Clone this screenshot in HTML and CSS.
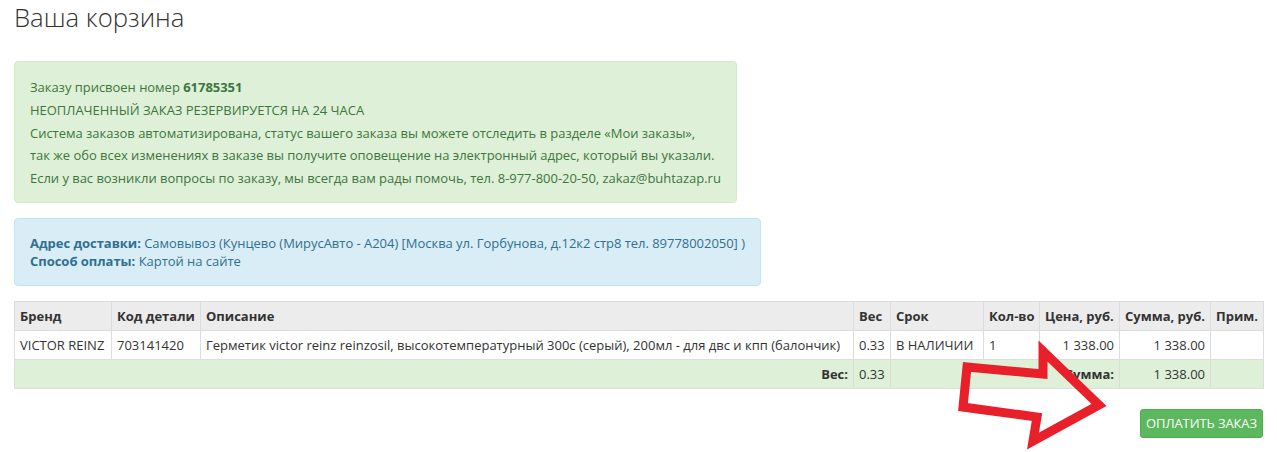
FILE: index.html
```html
<!DOCTYPE html>
<html lang="ru">
<head>
<meta charset="utf-8">
<title>Ваша корзина</title>
<link rel="stylesheet" href="styles.css">
</head>
<body>
<div class="page">
  <h1 class="title">Ваша корзина</h1>

  <div class="alert alert-success">
    <p>Заказу присвоен номер <b>61785351</b></p>
    <p>НЕОПЛАЧЕННЫЙ ЗАКАЗ РЕЗЕРВИРУЕТСЯ НА 24 ЧАСА</p>
    <p>Система заказов автоматизирована, статус вашего заказа вы можете отследить в разделе «Мои заказы»,</p>
    <p>так же обо всех изменениях в заказе вы получите оповещение на электронный адрес, который вы указали.</p>
    <p>Если у вас возникли вопросы по заказу, мы всегда вам рады помочь, тел. 8-977-800-20-50, zakaz@buhtazap.ru</p>
  </div>

  <div class="alert alert-info">
    <p><b>Адрес доставки:</b> Самовывоз (Кунцево (МирусАвто - А204) [Москва ул. Горбунова, д.12к2 стр8 тел. 89778002050] )</p>
    <p><b>Способ оплаты:</b> Картой на сайте</p>
  </div>

  <table class="cart">
    <colgroup>
      <col class="c-brand"><col class="c-code"><col class="c-desc"><col class="c-weight"><col class="c-term"><col class="c-qty"><col class="c-price"><col class="c-sum"><col class="c-note">
    </colgroup>
    <thead>
      <tr>
        <th>Бренд</th><th>Код детали</th><th>Описание</th><th>Вес</th><th>Срок</th><th>Кол-во</th><th>Цена, руб.</th><th>Сумма, руб.</th><th>Прим.</th>
      </tr>
    </thead>
    <tbody>
      <tr>
        <td>VICTOR REINZ</td><td>703141420</td><td>Герметик victor reinz reinzosil, высокотемпературный 300с (серый), 200мл - для двс и кпп (балончик)</td><td>0.33</td><td>В НАЛИЧИИ</td><td>1</td><td class="num">1 338.00</td><td class="num">1 338.00</td><td></td>
      </tr>
    </tbody>
    <tfoot>
      <tr>
        <th colspan="3" class="num">Вес:</th><td>0.33</td><th colspan="3" class="num">Сумма:</th><td class="num">1 338.00</td><td></td>
      </tr>
    </tfoot>
  </table>

  <div class="actions">
    <button class="btn-pay" type="button">ОПЛАТИТЬ ЗАКАЗ</button>
  </div>
</div>

<svg class="arrow" width="1277" height="452" viewBox="0 0 1277 452" aria-hidden="true">
  <polygon points="967,367 1043,374 1043,351 1099,405 1033,441 1037,417 963,407" fill="none" stroke="#e8202a" stroke-width="9" stroke-linejoin="miter" stroke-miterlimit="10"/>
</svg>
</body>
</html>
```

FILE: styles.css
```css
html, body {
  margin: 0;
  padding: 0;
  background: #fff;
}

body {
  font-family: "Open Sans", "Liberation Sans", sans-serif;
  font-size: 13px;
  color: #333;
  position: relative;
  width: 1277px;
  height: 452px;
  overflow: hidden;
}

.page {
  padding: 0 14px;
}

.title {
  margin: 0 0 25px;
  font-family: "Open Sans", "Liberation Sans", sans-serif;
  font-weight: 300;
  font-size: 25.7px;
  line-height: 36px;
  color: #333;
}

.alert {
  border: 1px solid transparent;
  border-radius: 4px;
  white-space: nowrap;
}

.alert p {
  margin: 0;
}

.alert-success {
  width: 691px;
  padding: 14px 15px 12px;
  background: #dff0d8;
  border-color: #d6e9c6;
  color: #3c763d;
  line-height: 22.8px;
  letter-spacing: -0.03px;
}

.alert-info {
  width: 715px;
  margin-top: 15px;
  padding: 15px 15px;
  background: #d9edf7;
  border-color: #bce8f1;
  color: #31708f;
  line-height: 18px;
  letter-spacing: -0.03px;
}

.cart {
  margin-top: 15px;
  width: 1249px;
  border-collapse: collapse;
  table-layout: fixed;
}

.c-brand { width: 97px; }
.c-code { width: 89px; }
.c-desc { width: 653px; }
.c-weight { width: 37px; }
.c-term { width: 93px; }
.c-qty { width: 56px; }
.c-price { width: 80px; }
.c-sum { width: 91px; }
.c-note { width: 53px; }

.cart th,
.cart td {
  border: 1px solid #ddd;
  padding: 5px 5px;
  height: 18px;
  line-height: 18px;
  text-align: left;
  white-space: nowrap;
  overflow: hidden;
}

.cart thead th {
  background: #ececec;
  font-weight: bold;
}

.cart tfoot th,
.cart tfoot td {
  background: #dff0d8;
}

.cart tfoot th {
  font-weight: bold;
}

.cart .num {
  text-align: right;
}

.actions {
  display: flex;
  justify-content: flex-end;
  margin-top: 20px;
}

.btn-pay {
  width: 123px;
  height: 29px;
  padding: 0;
  border: 1px solid #4cae4c;
  border-radius: 3px;
  background: #5cb85c;
  color: #fff;
  font-family: "Open Sans", "Liberation Sans", sans-serif;
  font-size: 13px;
  letter-spacing: -0.1px;
  cursor: pointer;
}

.arrow {
  position: absolute;
  left: 0;
  top: 0;
  pointer-events: none;
}
```
